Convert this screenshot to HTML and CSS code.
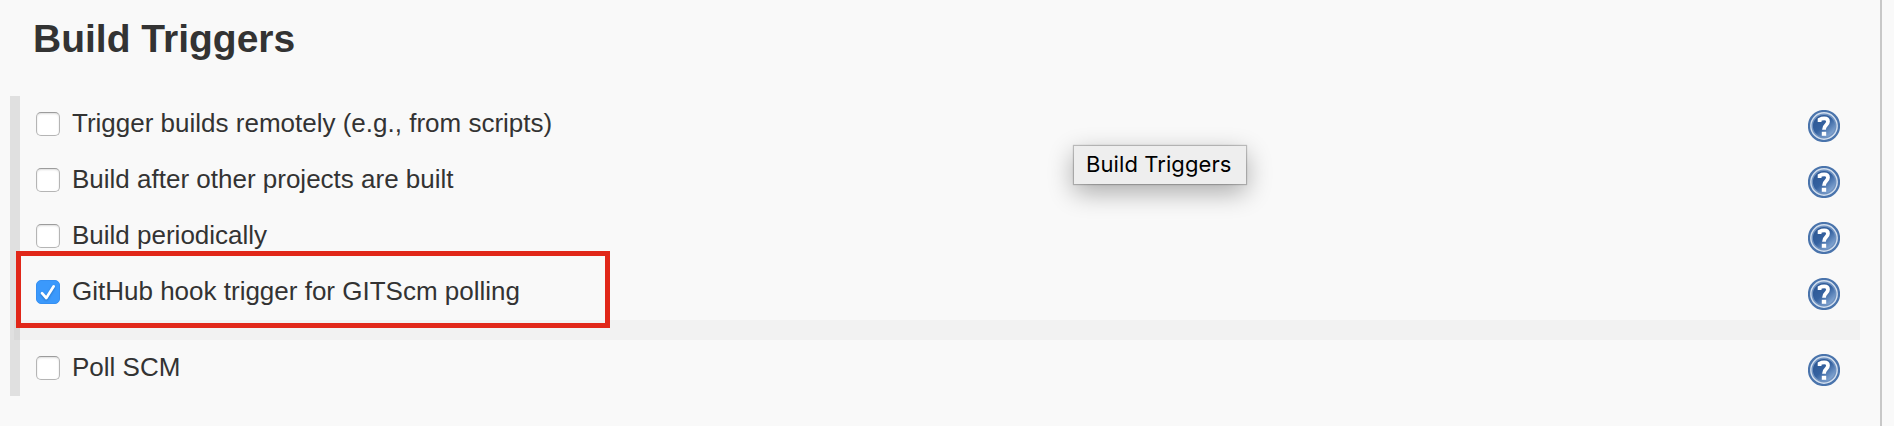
FILE: index.html
```html
<!DOCTYPE html>
<html lang="en">
<head>
<meta charset="utf-8">
<title>Build Triggers</title>
<link rel="stylesheet" href="styles.css">
</head>
<body>
<svg class="defs" width="0" height="0" aria-hidden="true">
  <defs>
    <linearGradient id="blue" x1="0.1" y1="0.1" x2="0.9" y2="1">
      <stop offset="0" stop-color="#2c5794"/><stop offset="0.45" stop-color="#3562a0"/><stop offset="1" stop-color="#9bbbe2"/>
    </linearGradient>
    <symbol id="help" viewBox="0 0 32 32">
      <circle cx="16" cy="16" r="15" fill="#d3dfee" stroke="#4a74ac" stroke-width="2.2"/>
      <circle cx="16" cy="16" r="11.8" fill="url(#blue)" stroke="#6f92c1" stroke-width="1.4"/>
      <path d="M11.6 12V9.6Q13.6 8.4 16.2 8.4Q20 8.4 20 11.6Q20 13.6 18 15.2Q16 16.8 16 19.8" fill="none" stroke="#fff" stroke-width="3.8"/>
      <rect x="13.8" y="21.8" width="4.4" height="4" fill="#fff"/>
    </symbol>
  </defs>
</svg>
<main class="panel">
  <h1 class="title">Build Triggers</h1>
  <div class="triggers">
    <div class="row"><label class="option"><input class="check" type="checkbox"><span class="label">Trigger builds remotely (e.g., from scripts)</span></label><svg class="help"><use href="#help"/></svg></div>
    <div class="row"><label class="option"><input class="check" type="checkbox"><span class="label">Build after other projects are built</span></label><svg class="help"><use href="#help"/></svg></div>
    <div class="row"><label class="option"><input class="check" type="checkbox"><span class="label">Build periodically</span></label><svg class="help"><use href="#help"/></svg></div>
    <div class="row"><label class="option"><span class="check checked"><svg class="tick" viewBox="0 0 24 24"><path d="M6 13.2L10.3 18L17.7 6.3" fill="none" stroke="#fff" stroke-width="2.7" stroke-linecap="round" stroke-linejoin="round"/></svg></span><span class="label">GitHub hook trigger for GITScm polling</span></label><svg class="help"><use href="#help"/></svg></div>
    <div class="band"></div>
    <div class="row"><label class="option"><input class="check" type="checkbox"><span class="label">Poll SCM</span></label><svg class="help"><use href="#help"/></svg></div>
  </div>
  <div class="highlight"></div>
  <div class="tooltip">Build Triggers</div>
</main>
</body>
</html>
```
FILE: styles.css
```css
* { box-sizing: border-box; }
body {
  margin: 0;
  overflow: hidden;
  background: #f9f9f9;
  color: #333;
  font-family: "Liberation Sans", Arial, sans-serif;
}
.defs { display: block; }
.panel {
  position: relative;
  width: 1882px;
  height: 426px;
  padding: 16px 20px 0 10px;
  border-right: 2px solid #c8c8c8;
}
.title {
  margin: 0 0 34px 23px;
  height: 46px;
  font-size: 39px;
  line-height: 46px;
  font-weight: bold;
}
.triggers {
  height: 300px;
  border-left: 10px solid #e0e0e0;
}
.row {
  display: flex;
  justify-content: space-between;
  height: 56px;
  padding: 14px 20px 0 16px;
}
.option {
  display: flex;
  gap: 12px;
  padding-top: 2px;
}
.check {
  appearance: none;
  flex: none;
  width: 24px;
  height: 24px;
  margin: 0;
  background: #fff;
  border: 1px solid #b5b5b5;
  border-top-color: #9c9c9c;
  border-radius: 5px;
  box-shadow: inset 0 1px 2px #ddd;
}
.checked {
  background: #3b99fc;
  border: 1px solid #3690f2;
  box-shadow: none;
}
.tick {
  display: block;
  width: 24px;
  height: 24px;
  margin: -1px;
  filter: drop-shadow(0 1px 1px #2471c2);
}
.label {
  height: 30px;
  margin-top: -4px;
  font-size: 26px;
  line-height: 30px;
  white-space: nowrap;
}
.help {
  flex: none;
  width: 32px;
  height: 32px;
}
.band {
  height: 20px;
  margin-left: -6px;
  background: rgba(0, 0, 0, 0.027);
}
.highlight {
  position: absolute;
  left: 16px;
  top: 251px;
  width: 594px;
  height: 77px;
  border: 5px solid #e12719;
}
.tooltip {
  position: absolute;
  left: 1074px;
  top: 146px;
  width: 172px;
  height: 38px;
  padding-left: 12px;
  background: #eee;
  box-shadow: 0 0 1px 1px rgba(0, 0, 0, 0.22), 0 8px 26px rgba(0, 0, 0, 0.33);
  color: #000;
  font: 22px/37px Inter, sans-serif;
  letter-spacing: 0.08px;
  white-space: nowrap;
}
```
